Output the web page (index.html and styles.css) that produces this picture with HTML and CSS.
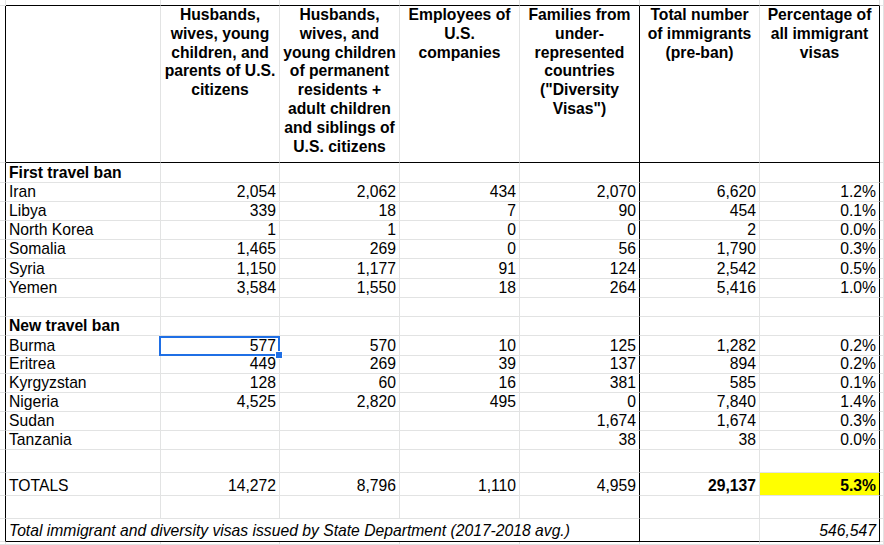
FILE: index.html
```html
<!DOCTYPE html>
<html lang="en">
<head>
<meta charset="utf-8">
<title>Travel ban immigrant visas</title>
<link rel="stylesheet" href="styles.css">
</head>
<body>
<table class="sheet">
  <colgroup>
    <col class="w-sl">
    <col class="w-a">
    <col class="w-b">
    <col class="w-n">
    <col class="w-n">
    <col class="w-n">
    <col class="w-n">
    <col class="w-n">
    <col class="w-sr">
  </colgroup>
  <tbody>
    <tr class="top">
      <td class="sl"></td><td></td><td></td><td></td><td></td><td></td><td></td><td></td><td class="sr"></td>
    </tr>
    <tr class="head">
      <td class="sl"></td>
      <td></td>
      <td>Husbands, wives, young children, and parents of U.S. citizens</td>
      <td>Husbands, wives, and young children of permanent residents + adult children and siblings of U.S. citizens</td>
      <td>Employees of U.S. companies</td>
      <td class="bk">Families from under-represented countries ("Diversity Visas")</td>
      <td>Total number of immigrants (pre-ban)</td>
      <td class="bk">Percentage of all immigrant visas</td>
      <td class="sr"></td>
    </tr>
    <tr class="h20">
      <td class="sl"></td><td class="b">First travel ban</td><td></td><td></td><td></td><td class="bk"></td><td></td><td class="bk"></td><td class="sr"></td>
    </tr>
    <tr>
      <td class="sl"></td><td>Iran</td><td class="n">2,054</td><td class="n">2,062</td><td class="n">434</td><td class="n bk">2,070</td><td class="n">6,620</td><td class="n bk">1.2%</td><td class="sr"></td>
    </tr>
    <tr>
      <td class="sl"></td><td>Libya</td><td class="n">339</td><td class="n">18</td><td class="n">7</td><td class="n bk">90</td><td class="n">454</td><td class="n bk">0.1%</td><td class="sr"></td>
    </tr>
    <tr>
      <td class="sl"></td><td>North Korea</td><td class="n">1</td><td class="n">1</td><td class="n">0</td><td class="n bk">0</td><td class="n">2</td><td class="n bk">0.0%</td><td class="sr"></td>
    </tr>
    <tr>
      <td class="sl"></td><td>Somalia</td><td class="n">1,465</td><td class="n">269</td><td class="n">0</td><td class="n bk">56</td><td class="n">1,790</td><td class="n bk">0.3%</td><td class="sr"></td>
    </tr>
    <tr class="h20">
      <td class="sl"></td><td>Syria</td><td class="n">1,150</td><td class="n">1,177</td><td class="n">91</td><td class="n bk">124</td><td class="n">2,542</td><td class="n bk">0.5%</td><td class="sr"></td>
    </tr>
    <tr>
      <td class="sl"></td><td>Yemen</td><td class="n">3,584</td><td class="n">1,550</td><td class="n">18</td><td class="n bk">264</td><td class="n">5,416</td><td class="n bk">1.0%</td><td class="sr"></td>
    </tr>
    <tr>
      <td class="sl"></td><td></td><td></td><td></td><td></td><td class="bk"></td><td></td><td class="bk"></td><td class="sr"></td>
    </tr>
    <tr>
      <td class="sl"></td><td class="b">New travel ban</td><td></td><td></td><td></td><td class="bk"></td><td></td><td class="bk"></td><td class="sr"></td>
    </tr>
    <tr class="h20">
      <td class="sl"></td><td>Burma</td>
      <td class="n sel-cell">577<div class="sel"></div><div class="handle"></div></td>
      <td class="n">570</td><td class="n">10</td><td class="n bk">125</td><td class="n">1,282</td><td class="n bk">0.2%</td><td class="sr"></td>
    </tr>
    <tr class="h18">
      <td class="sl"></td><td>Eritrea</td><td class="n">449</td><td class="n">269</td><td class="n">39</td><td class="n bk">137</td><td class="n">894</td><td class="n bk">0.2%</td><td class="sr"></td>
    </tr>
    <tr>
      <td class="sl"></td><td>Kyrgyzstan</td><td class="n">128</td><td class="n">60</td><td class="n">16</td><td class="n bk">381</td><td class="n">585</td><td class="n bk">0.1%</td><td class="sr"></td>
    </tr>
    <tr>
      <td class="sl"></td><td>Nigeria</td><td class="n">4,525</td><td class="n">2,820</td><td class="n">495</td><td class="n bk">0</td><td class="n">7,840</td><td class="n bk">1.4%</td><td class="sr"></td>
    </tr>
    <tr>
      <td class="sl"></td><td>Sudan</td><td class="n"></td><td class="n"></td><td class="n"></td><td class="n bk">1,674</td><td class="n">1,674</td><td class="n bk">0.3%</td><td class="sr"></td>
    </tr>
    <tr>
      <td class="sl"></td><td>Tanzania</td><td class="n"></td><td class="n"></td><td class="n"></td><td class="n bk">38</td><td class="n">38</td><td class="n bk">0.0%</td><td class="sr"></td>
    </tr>
    <tr class="h23">
      <td class="sl"></td><td></td><td></td><td></td><td></td><td class="bk"></td><td></td><td class="bk"></td><td class="sr"></td>
    </tr>
    <tr class="h23">
      <td class="sl"></td><td>TOTALS</td><td class="n">14,272</td><td class="n">8,796</td><td class="n">1,110</td><td class="n bk">4,959</td><td class="n b">29,137</td><td class="n b bk hl">5.3%</td><td class="sr"></td>
    </tr>
    <tr class="h23">
      <td class="sl"></td><td></td><td></td><td></td><td></td><td class="bk"></td><td></td><td class="bk"></td><td class="sr"></td>
    </tr>
    <tr class="h23 last">
      <td class="sl"></td>
      <td class="i bk foot" colspan="5">Total immigrant and diversity visas issued by State Department (2017-2018 avg.)</td>
      <td></td>
      <td class="n i bk foot">546,547</td>
      <td class="sr"></td>
    </tr>
    <tr class="bot">
      <td class="sl"></td><td></td><td></td><td></td><td></td><td></td><td></td><td></td><td class="sr"></td>
    </tr>
  </tbody>
</table>
</body>
</html>
```

FILE: styles.css
```css
html, body {
  margin: 0;
  padding: 0;
  background: #ffffff;
  overflow: hidden;
}

.sheet {
  border-collapse: separate;
  border-spacing: 0;
  table-layout: fixed;
  width: 884px;
  font-family: "Liberation Sans", Arial, sans-serif;
  font-size: 15.7px;
  color: #000000;
}

.w-sl { width: 6px; }
.w-a { width: 155px; }
.w-b { width: 119px; }
.w-n { width: 120px; }
.w-sr { width: 4px; }

.sheet td {
  border-right: 1px solid #e2e3e3;
  border-bottom: 1px solid #e2e3e3;
  padding: 0 3px 1px 3px;
  vertical-align: bottom;
  white-space: nowrap;
  line-height: 16px;
  overflow: visible;
}

.sheet tr { height: 19px; }
.sheet tr.top { height: 6px; }
.sheet tr.head { height: 157px; }
.sheet tr.h20 { height: 20px; }
.sheet tr.h18 { height: 18px; }
.sheet tr.h23 { height: 23px; }
.sheet tr.bot { height: 3px; }

.sheet td.sl,
.sheet td.sr {
  padding: 0;
}

/* outer frame */
.sheet tr:not(.top):not(.bot) td.sl { border-right-color: #000000; }
.sheet tr.top td:not(.sl):not(.sr) { border-bottom-color: #000000; }
.sheet tr.head td:not(.sl):not(.sr) { border-bottom-color: #000000; }
.sheet tr.last td:not(.sl):not(.sr) { border-bottom-color: #000000; }
.sheet td.bk { border-right-color: #000000; }

/* header */
.sheet tr.head td {
  vertical-align: top;
  white-space: normal;
  text-align: center;
  font-weight: bold;
  line-height: 18.8px;
  padding: 0 2px;
}

.sheet td.n { text-align: right; }
.sheet td.b { font-weight: bold; }
.sheet td.i { font-style: italic; }
.sheet td.foot { padding-bottom: 2px; }
.sheet td.hl { background: #ffff00; }

/* selected cell */
.sheet td.sel-cell { position: relative; }

.sel {
  position: absolute;
  left: -2px;
  top: 0;
  width: 121px;
  height: 20px;
  box-sizing: border-box;
  border: 2px solid #1f6fe5;
  pointer-events: none;
}

.handle {
  position: absolute;
  left: 114px;
  top: 15px;
  width: 8px;
  height: 8px;
  box-sizing: border-box;
  background: #1f6fe5;
  border: 1px solid #ffffff;
}
```
